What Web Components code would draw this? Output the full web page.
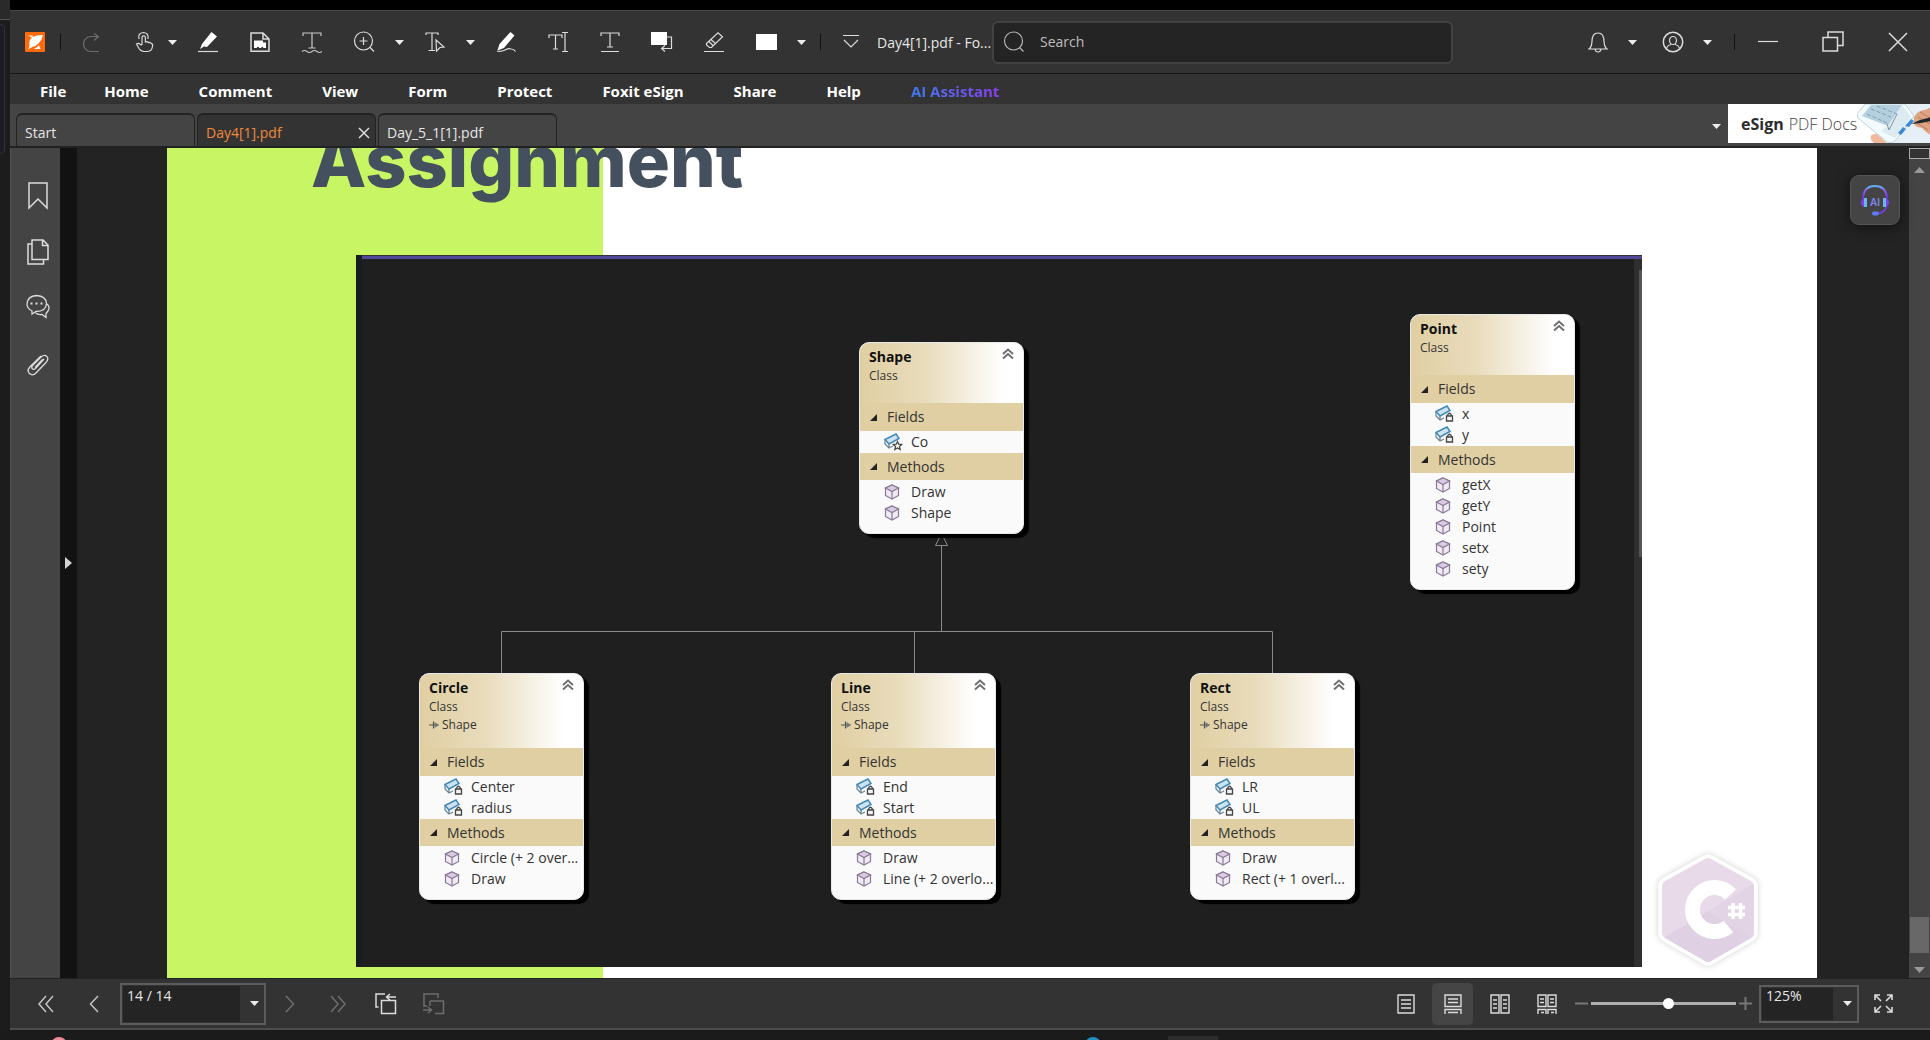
<!DOCTYPE html>
<html lang="en">
<head>
<meta charset="utf-8">
<title>Day4[1].pdf - Foxit</title>
<style>
html,body{margin:0;height:100%;background:#000;overflow:hidden}
body{font:14px/20px "Open Sans","Noto Sans",sans-serif;color:#e6e6e6}
</style>
</head>
<body>
<desktop-screen></desktop-screen>
<script>
const BASE = `<style>
*{box-sizing:border-box}
button{all:unset;box-sizing:border-box;display:flex;align-items:center;justify-content:center;cursor:pointer}
input{font:inherit;color:inherit;border:0;outline:0;margin:0}
</style>`;

function define(name, html, ready) {
  const tpl = document.createElement('template');
  tpl.innerHTML = BASE + html;
  customElements.define(name, class extends HTMLElement {
    constructor() {
      super();
      this.attachShadow({mode: 'open'}).append(tpl.content.cloneNode(true));
    }
    connectedCallback() { if (ready) ready(this, this.shadowRoot); }
  });
}

/* name: [width, height, svg body] */
const ICONS = {
  logo: [20,20,`<rect width="20" height="20" rx="1" fill="#ff6a0a" stroke="none"/><path fill="#fff" stroke="none" d="M3 3.500h5l-.5 1.500Q11 3 18 3q-1 5-4.500 8.500-2.500 2.500-5 3-2 .5-5.500 3 1.500-2.500 1.500-4.500Q3.500 8 7 5.500zM14 13l1.500 4H9q3.500-1.200 5-4z"/>`],
  redo: [20,20,`<path stroke="#6e6e6e" d="M12 1.500l4.500 3-4.500 4M16.500 4.500H9a7 7 0 0 0 0 15h8"/>`],
  hand: [20,22,`<path d="M8 14V6.500a1.700 1.700 0 0 1 3.400 0V11q2-1 3 .6 2-.8 3 1 1.600.3 1.200 2.200-.3 5.200-5 5.700H10q-3 0-5-3l-2.500-4.500q2-1.400 4 .6L8 14M5 8q-1.500-6 4.500-6.500Q15 2 14 8"/>`],
  highlight: [20,20,`<path fill="#fff" stroke="none" d="M13.500 0l5.500 4.500L9 15l-3-.5-4 2.500 2-5z"/><path stroke="#d8d8d8" d="M0 19.500h20"/>`],
  stamp: [20,20,`<path d="M1 1h12l6 6v12.300H1zM13 1v6h6" stroke-width="1.500"/><path fill="#fff" stroke="none" d="M4 8.500h9v2h3V16h-2.500l-1.200-1.500L11 16H9.500L8 14.500 6.500 16H4z"/>`],
  twave: [20,20,`<path stroke="#c8c8c8" d="M1 4V1h18v3M10 1v15M6.500 16h7M0 19.500q2.500-2 5 0t5 0 5 0 5 0"/>`],
  zoom: [22,22,`<circle cx="10.500" cy="10" r="9"/><path d="M10.500 6v8M6.500 10h8M17 16.500l4 4"/>`],
  tselect: [20,20,`<path d="M1 3V1h12v2M7 1v17M3.500 18.500H10M11 8l8 7-4 .5-3.500 3.500z"/>`],
  pencil: [20,20,`<path fill="#fff" stroke="none" d="M14.500 0l4 3.500L8 16l-6.500 2.500L3.500 12z"/><path d="M1 19q4 1 8-1t6-1q3 0 4.500 2.500"/>`],
  tcursor: [20,20,`<path d="M1 6V3h13v3M7.500 3v14M5 17h5M14 .5h6M17 .5v19M14 19.500h6"/>`],
  tunder: [20,20,`<path d="M1 4V1h18v3M10 1v14M7 15h6M1 19.500h18"/>`],
  replace: [22,20,`<path fill="#fff" stroke="none" d="M0 0h16v13H0z"/><path d="M16 5h4.500v11.500H11M14 13.500l-3.500 3 3.500 3"/>`],
  eraser: [20,20,`<path d="M2.500 11.500L14 .8l4.500 4L7.500 15.500H5.500L2.500 13zM7 7.500l4.500 4M5 9.500l4.500 4.500M0 19.500h20"/>`],
  rect: [21,16,`<path fill="#fff" stroke="none" d="M0 0h21v16H0z"/>`],
  more: [16,16,`<path d="M0 1.500h16M1 6l7 7 7-7"/>`],
  search: [22,22,`<circle cx="10.500" cy="10" r="9" stroke="#b4b4b4"/><path stroke="#b4b4b4" d="M16.500 16.500l4 4"/>`],
  bell: [20,20,`<path d="M0 17h20M1.500 17Q4 14 4 9.500 4 1 10 1t6 8.500Q16 14 18.500 17M7 17q.5 3 3 3t3-3"/>`],
  user: [22,22,`<circle cx="11" cy="11" r="9.700" stroke-width="1.500"/><ellipse cx="11" cy="9.500" rx="3.500" ry="4"/><path d="M4.500 17.500q.5-3 4.500-4M17.500 17.500q-.5-3-4.500-4"/>`],
  min: [20,20,`<path d="M0 9.500h20"/>`],
  restore: [22,22,`<path d="M1 6.500h14.500V20H1zM6 6.500V1h15v13.500h-5.500" stroke-width="1.500"/>`],
  close: [18,18,`<path d="M0 0l18 18M18 0L0 18" stroke-width="1.500"/>`],
  x: [10,10,`<path d="M0 0l10 10M10 0L0 10" stroke-width="1.500"/>`],
  bookmark: [20,28,`<path d="M1 1h18v25l-9-9-9 9z" stroke-width="1.500"/>`],
  pages: [22,26,`<path d="M5 1h11l5 5v14.500H5zM15.500 1v5.500H21M5 5H1v20h15.500v-4" stroke-width="1.500"/>`],
  comments: [24,28,`<path d="M6 17Q1 14.500 1 10q.5-8 9.500-8.500Q20 2 20.500 9.500 20 17.500 10 17.500L6 20zM21 10q3.500 3 1 7l-2 2.500v4L16 20.500q-4 .5-6.500-1.500" stroke-width="1.300"/><path stroke-dasharray="2 3" stroke-width="2" d="M4.500 9.500h13"/>`],
  clip: [22,26,`<path d="M17 7.500L8.500 17q-2 1.500-3.200.3T5.500 14L14 5.500q3.500-3 5.800-.6t-.6 5.800L9 21.500q-3.500 3.300-6.500.6t.3-6.600L14 4.500M15.500 8L8 16" transform="translate(0 .5)" stroke-width="1.300"/>`],
  first: [16,16,`<path stroke="#c4c4c4" d="M8 0L1 8l7 8M15 0L8 8l7 8" stroke-width="1.500"/>`],
  prev: [10,16,`<path stroke="#c4c4c4" d="M9 0L1.500 8 9 16" stroke-width="1.500"/>`],
  next: [10,16,`<path stroke="#6e6e6e" d="M1 0l7.500 8L1 16" stroke-width="1.500"/>`],
  last: [16,16,`<path stroke="#6e6e6e" d="M1 0l7 8-7 8M8 0l7 8-7 8" stroke-width="1.500"/>`],
  back: [22,22,`<path d="M6.500 7.500H20.500V20.500H6.500zM3.500 14H1V1h9M12 4h9M15 1l-3.500 3L15 7" stroke-width="1.500"/>`],
  fwd: [22,22,`<path stroke="#6e6e6e" d="M7 8h13.500v12.500H12M7 8v5M4 13H1V1h14v4M0 17h8M5 14l3.500 3L5 20" stroke-width="1.500"/>`],
  single: [18,20,`<path d="M1 1h16v18H1zM4 6h10M4 10h10M4 14h10" stroke-width="1.400"/>`],
  cont: [18,20,`<path d="M1 1h16v11.500H1zM4 5h10M4 8.500h10M1 20v-4.500h16V20M4 18.500h10" stroke-width="1.400"/>`],
  facing: [20,20,`<path d="M1 1h8v18H1zM11 1h8v18h-8zM3 6h4M3 10h4M3 14h4M13 6h4M13 10h4M13 14h4" stroke-width="1.400"/>`],
  facingc: [20,20,`<path d="M1 1h8v11.500H1zM11 1h8v11.500h-8zM3 5h4M3 8.500h4M13 5h4M13 8.500h4M1 20v-4.500h8V20M11 20v-4.500h8V20M4 18.500h3M14 18.500h3" stroke-width="1.400"/>`],
  minus: [13,13,`<path stroke="#787878" d="M0 6.500h13" stroke-width="2"/>`],
  plus: [13,13,`<path stroke="#787878" d="M0 6.500h13M6.500 0v13" stroke-width="2"/>`],
  full: [19,19,`<path d="M1 6V1h5M13 1h5v5M18 13v5h-5M6 18H1v-5M1 1l6 6M18 1l-6 6M18 18l-6-6M1 18l6-6" stroke-width="1.600"/>`],
  caret: [9,5,`<path fill="#ededed" stroke="none" d="M0 0h9L4.500 5z"/>`],
  up: [11,6,`<path fill="#999" stroke="none" d="M0 6h11L5.500 0z"/>`],
  down: [11,6,`<path fill="#999" stroke="none" d="M0 0h11L5.500 6z"/>`],
  right: [7,12,`<path fill="#d4d4d4" stroke="none" d="M0 0l7 6-7 6z"/>`],
  collapse: [12,11,`<path d="M1 6l5-4.500L11 6M1 10.500L6 6l5 4.500" stroke="#707070" stroke-width="2"/>`],
  tri: [7,7,`<path fill="#222" stroke="none" d="M7 0v7H0z"/>`],
  inherit: [10,8,`<path stroke="#555" d="M0 4h9.500M4.500 .5v7"/><path fill="#777" stroke="none" d="M5.500 1v6L10 4z"/>`],
  field: [18,17,`<path d="M1 6.500L12 1l3 4.500-10 5.500z" fill="#cfe3ef" stroke="#4189b8" stroke-width="1.500"/><path d="M1 6.500V11l4 4 4-2M5 11v4" stroke="#6b8798" stroke-width="1.300"/><path d="M11.500 11h6v5h-6zM12.800 11V9.500q1.700-2.500 3.400 0V11" fill="#f4f4f4" stroke="#444" stroke-width="1.300"/>`],
  fieldstar: [18,17,`<path d="M1 6.500L12 1l3 4.500-10 5.500z" fill="#cfe3ef" stroke="#4189b8" stroke-width="1.500"/><path d="M1 6.500V11l4 4 4-2M5 11v4" stroke="#6b8798" stroke-width="1.300"/><path d="M13.500 8.500l1.200 2.700 3 .3-2.200 2 .7 3-2.700-1.500-2.700 1.500.7-3-2.200-2 3-.3z" fill="#f8f8f8" stroke="#444"/>`],
  method: [16,16,`<path d="M8 1l6.500 3v7.500L8 15l-6.500-3.500V4z" fill="#f0eaf2" stroke="#8b7a97" stroke-width="1.200"/><path d="M8 1l6.500 3L8 7.500 1.500 4z" fill="#d9cce2" stroke="#8b7a97"/><path d="M8 7.500V15" stroke="#8b7a97" stroke-width="1.200"/>`]
};
define('ui-icon', `<style>:host{display:inline-flex;flex:none}svg{display:block;fill:none;stroke:#dcdcdc;stroke-width:1.2;overflow:visible}</style><div></div>`, (el, r) => {
  const [w, h, body] = ICONS[el.getAttribute('name')];
  r.querySelector('div').innerHTML = `<svg width="${w}" height="${h}" viewBox="0 0 ${w} ${h}" aria-hidden="true">${body}</svg>`;
});

/* toolbar button, with an optional drop-down arrow */
define('tool-button', `<style>
:host{display:flex;align-items:center;height:42px;flex:none}
.main{width:52px;height:42px}
.arrow{display:none;width:19px;height:42px}
:host([split]) .arrow{display:flex}
:host([split=narrow]) .arrow{width:12px;margin:0 4px 0 -4px}
:host([split=wide]) .arrow{width:23px;margin:0 3px 0 -3px}
:host([size=win]) .main{width:65px}
:host([size=nav]) .main{width:48px}
:host([size=view]) .main{width:47px}
:host([active]) .main{width:41px;margin:0 3px;background:#454545;border-radius:5px}
</style><button class="main"></button><button class="arrow" aria-label="More"><ui-icon name="caret"></ui-icon></button>`, (el, r) => {
  const main = r.querySelector('.main');
  main.setAttribute('aria-label', el.getAttribute('icon'));
  main.innerHTML = `<ui-icon name="${el.getAttribute('icon')}"></ui-icon>`;
});

define('title-bar', `<style>
:host{display:flex;align-items:center;height:64px;background:#333;border-top:1px solid #4a4a4a;border-bottom:1px solid #161616}
.logo{width:50px;display:flex;justify-content:center}
.sep{width:1px;height:16px;background:#111;flex:none;margin:0 5px 0 0}
.sep.mid{margin:0 4px 0 9px}
.sep.end{margin:0 0 0 12px}
.title{width:115px;white-space:nowrap;flex:none;margin-top:2px}
.search{display:flex;align-items:center;gap:15px;flex:0 1 461px;height:43px;border:2px solid #424242;border-radius:6px;background:#242424;padding-left:9px}
.search input{background:none;flex:1;min-width:0;color:#c4c4c4;padding:0}
.search input::placeholder{color:#bebebe;opacity:1}
.win{margin-left:auto;display:flex;align-items:center}
</style>
<span class="logo"><ui-icon name="logo"></ui-icon></span><span class="sep"></span>
<tool-button icon="redo"></tool-button>
<tool-button icon="hand" split="narrow"></tool-button>
<tool-button icon="highlight"></tool-button>
<tool-button icon="stamp"></tool-button>
<tool-button icon="twave"></tool-button>
<tool-button icon="zoom" split></tool-button>
<tool-button icon="tselect" split></tool-button>
<tool-button icon="pencil"></tool-button>
<tool-button icon="tcursor"></tool-button>
<tool-button icon="tunder"></tool-button>
<tool-button icon="replace"></tool-button>
<tool-button icon="eraser"></tool-button>
<tool-button icon="rect" split></tool-button>
<span class="sep mid"></span>
<tool-button icon="more"></tool-button>
<span class="title">Day4[1].pdf - Fo...</span>
<label class="search"><ui-icon name="search"></ui-icon><input type="text" placeholder="Search" aria-label="Search"></label>
<div class="win">
<tool-button icon="bell" split="wide"></tool-button><tool-button icon="user" split="wide"></tool-button>
<span class="sep end"></span>
<tool-button icon="min" size="win"></tool-button><tool-button icon="restore" size="win"></tool-button><tool-button icon="close" size="win"></tool-button>
</div>`);

define('menu-bar', `<style>
:host{display:block;background:#333;height:30px}
nav{display:flex;gap:50px;padding:5px 0 0 30px;font-weight:700;font-size:15px;line-height:24px;color:#fff}
button:first-child{margin-right:-12px}
.ai{background:linear-gradient(90deg,#3f7bf0,#8b3ff0);-webkit-background-clip:text;background-clip:text;color:transparent}
</style><nav><button>File</button><button>Home</button><button>Comment</button><button>View</button><button>Form</button><button>Protect</button><button>Foxit eSign</button><button>Share</button><button>Help</button><button class="ai">AI Assistant</button></nav>`);

define('doc-tab', `<style>
:host{display:flex;align-items:center;justify-content:space-between;width:179px;height:33px;padding:5px 6px 0 8px;background:#444;border:solid #222;border-width:2px 1px 0;border-radius:6px 6px 0 0}
:host([active]){background:#333;color:#f08a3c}
.x{display:none}:host([active]) .x{display:flex}
</style><button><slot></slot></button><button class="x" aria-label="Close tab"><ui-icon name="x"></ui-icon></button>`);

define('esign-banner', `<style>
:host{display:flex;width:202px;height:39px;background:#fff}
a{display:flex;flex:1;align-items:center;padding-left:13px;color:#444;text-decoration:none;font-size:16px;white-space:nowrap}
b{color:#2c2c2c;margin-right:5px}span{font-weight:300;flex:1}svg{flex:none}
</style><a href="#"><b>eSign</b><span>PDF Docs</span><svg width="75" height="39" viewBox="0 0 75 39"><path d="M44 0h31v39H34z" fill="#e6eff6"/><path d="M14 36q-2-7 6-6l10 9H17z" fill="#f0b99c"/><path d="M0 10L8 0h40l9 12-19 25q-4 3-8 1L1 14z" fill="#f3fafd" stroke="#bfd3dd"/><path d="M5 12L14 1h31l-14 21z" fill="#b4d0de"/><path d="M31 22L45 1l9 12-16 21-14-7z" fill="#dcebf1"/><path d="M14 5l20 8M10 10l20 9M20 2l20 8" stroke="#7da2b5" stroke-dasharray="4 2" fill="none"/><path d="M30 20l2 6 8-16" stroke="#89939b" fill="none"/><path d="M41 29l5-6 3 2-5 6zM48 22l6-7 3 2-5 6z" fill="#3d8ad6"/><path d="M57 13q4-7 11-7l7-3v29q-7-4-10-8-8-1-8-5z" fill="#dda483"/><path d="M63 8l12 7M61 13l12 7M60 19l11 7" stroke="#b97b5c" fill="none"/><path d="M54 20l9-4 12-3v4l-11 2z" fill="#23272c"/></svg></a>`);

define('tab-strip', `<style>
:host{display:flex;height:44px;background:#444;border-bottom:2px solid #222;padding-left:6px;justify-content:space-between}
.tabs{display:flex;gap:2px;align-items:flex-end}
.right{display:flex;align-items:flex-start}
.list{width:24px;height:44px}
</style><div class="tabs"><doc-tab>Start</doc-tab><doc-tab active>Day4[1].pdf</doc-tab><doc-tab>Day_5_1[1].pdf</doc-tab></div>
<div class="right"><button class="list" aria-label="All tabs"><ui-icon name="caret"></ui-icon></button><esign-banner></esign-banner></div>`);

define('side-rail', `<style>
:host{display:flex;flex:none}
.tools{width:50px;background:#444;border-left:1px solid #555;padding-top:20px;display:flex;flex-direction:column;align-items:stretch}
.tools button{height:56px;padding-left:4px}
.grip{width:17px;background:#121212}
</style><div class="tools"><button aria-label="Bookmarks"><ui-icon name="bookmark"></ui-icon></button><button aria-label="Pages"><ui-icon name="pages"></ui-icon></button><button aria-label="Comments"><ui-icon name="comments"></ui-icon></button><button aria-label="Attachments"><ui-icon name="clip"></ui-icon></button></div>
<button class="grip" aria-label="Expand panel"><ui-icon name="right"></ui-icon></button>`);

define('class-member', `<style>:host{display:flex;align-items:center;height:21px;padding-left:24px;white-space:nowrap}.i{width:27px;display:flex}</style><span class="i"></span><slot></slot>`, (el, r) => {
  r.querySelector('.i').innerHTML = `<ui-icon name="${el.getAttribute('kind')}"></ui-icon>`;
});

define('class-node', `<style>
:host{position:absolute;width:165px;border:1px solid #e8e8e8;border-radius:10px;background:#fafafa;box-shadow:5px 4px 1px #000;color:#333;overflow:hidden;line-height:18px}
header{display:flex;justify-content:space-between;height:60px;padding:5px 9px 0 9px;background:linear-gradient(90deg,#e0cfa2,#e9dcbc 40%,#fff 88%);font-size:12px;line-height:19px}
:host([base]) header{height:74px}
h2{margin:0;font-size:14px;line-height:18px;color:#111}
.base{display:none;line-height:18px}
:host([base]) .base{display:flex;align-items:center;gap:3px}
h3{display:flex;align-items:center;gap:10px;margin:0;height:28px;padding-left:10px;background:#e0cfa2;font-weight:400;font-size:14px}
h3.m{height:27px}
.f{padding-bottom:1px}.ms{padding:1px 0 10px}
</style><header><div><h2></h2><div>Class</div><div class="base"><ui-icon name="inherit"></ui-icon><span></span></div></div><ui-icon name="collapse"></ui-icon></header>
<h3><ui-icon name="tri"></ui-icon>Fields</h3><div class="f"><slot name="field"></slot></div>
<h3 class="m"><ui-icon name="tri"></ui-icon>Methods</h3><div class="ms"><slot></slot></div>`, (el, r) => {
  r.querySelector('h2').textContent = el.getAttribute('name');
  r.querySelector('.base span').textContent = el.getAttribute('base') || '';
});

define('class-diagram', `<style>
:host{display:block;position:relative;height:712px;background:linear-gradient(#555,#555) right 15px/3px 287px no-repeat,linear-gradient(90deg,#1f1f1f calc(100% - 8px),#2f2f2f 0);border-left:6px solid #191c22;overflow:hidden}
.bar{height:4px;background:#51489a;border-top:1px solid #333}
svg{position:absolute;left:0;top:0;width:100%;height:100%;fill:none;stroke:#898989}
.shape{left:497px;top:87px}.point{left:1048px;top:59px}.circle{left:57px;top:418px}.line{left:469px;top:418px}.rect{left:828px;top:418px}
</style><div class="bar"></div>
<svg><path d="M579.500 291V376.500M573.500 290.500h12l-6-12zM139.500 418V376.500H910.500V418M552.500 376.500V418"/></svg>
<class-node class="shape" name="Shape"><class-member slot="field" kind="fieldstar">Co</class-member><class-member kind="method">Draw</class-member><class-member kind="method">Shape</class-member></class-node>
<class-node class="point" name="Point"><class-member slot="field" kind="field">x</class-member><class-member slot="field" kind="field">y</class-member><class-member kind="method">getX</class-member><class-member kind="method">getY</class-member><class-member kind="method">Point</class-member><class-member kind="method">setx</class-member><class-member kind="method">sety</class-member></class-node>
<class-node class="circle" name="Circle" base="Shape"><class-member slot="field" kind="field">Center</class-member><class-member slot="field" kind="field">radius</class-member><class-member kind="method">Circle (+ 2 over...</class-member><class-member kind="method">Draw</class-member></class-node>
<class-node class="line" name="Line" base="Shape"><class-member slot="field" kind="field">End</class-member><class-member slot="field" kind="field">Start</class-member><class-member kind="method">Draw</class-member><class-member kind="method">Line (+ 2 overlo...</class-member></class-node>
<class-node class="rect" name="Rect" base="Shape"><class-member slot="field" kind="field">LR</class-member><class-member slot="field" kind="field">UL</class-member><class-member kind="method">Draw</class-member><class-member kind="method">Rect (+ 1 overl...</class-member></class-node>`);

define('csharp-logo', `<style>:host{display:block}svg{display:block;overflow:visible}</style>
<svg width="104" height="114" viewBox="0 0 104 114" role="img" aria-label="C# logo"><defs><filter id="g" x="-20%" y="-20%" width="140%" height="140%"><feDropShadow dx="0" dy="0" stdDeviation="3" flood-color="#000" flood-opacity=".2"/></filter><clipPath id="h"><path d="M49 6Q52 4 55 6L95 28Q98 30 98 33V80Q98 83 95 85L55 108Q52 110 49 108L9 85Q6 83 6 80V33Q6 30 9 28z"/></clipPath></defs>
<path d="M49 6Q52 4 55 6L95 28Q98 30 98 33V80Q98 83 95 85L55 108Q52 110 49 108L9 85Q6 83 6 80V33Q6 30 9 28z" fill="#fff" stroke="#fff" stroke-width="7" filter="url(#g)"/>
<g clip-path="url(#h)"><path fill="#e8dae8" d="M0 0h104v114H0z"/><path fill="#dfd0e3" d="M0 89L52 58l52 31v25H0z"/><path fill="#e2d4e5" d="M104 27L52 58l52 31z"/></g>
<path d="M74.500 41.500A22 22 0 1 0 72.500 73.500" fill="none" stroke="#fff" stroke-width="15"/>
<path d="M77 50v16M84.500 50v16M72 54.500h17M72 61.500h17" stroke="#fff" stroke-width="3.500"/></svg>`);

define('pdf-page', `<style>
:host{display:flow-root;position:relative;flex:1;background:linear-gradient(90deg,#c7f564 436px,#fff 436px);overflow:hidden}
h1{margin:-23px 0 58px 144px;font:800 72px/72px Inter,"Open Sans",sans-serif;color:#45505e}
class-diagram{margin:0 175px 0 189px}
csharp-logo{position:absolute;right:57px;bottom:11px}
</style><h1>Assignment</h1><class-diagram></class-diagram><csharp-logo></csharp-logo>`);

define('scroll-rail', `<style>
:host{display:flex;flex-direction:column;align-items:center;width:21px;background:#444;flex:none}
.split{width:21px;height:11px;border:1px solid #aaa;background:#333}
.arrow{width:21px;height:22px}.arrow:last-child{height:17px;margin-top:8px}
.track{flex:1;display:flex;align-items:flex-end}
.thumb{width:19px;height:36px;background:#686868}
</style><div class="split"></div><button class="arrow" aria-label="Scroll up"><ui-icon name="up"></ui-icon></button><div class="track"><div class="thumb"></div></div><button class="arrow" aria-label="Scroll down"><ui-icon name="down"></ui-icon></button>`);

define('ai-helper', `<style>:host{display:block}
button{width:50px;height:50px;border-radius:9px;background:#444;border:1px solid #555;box-shadow:0 2px 14px #0008}
text{font:600 10px Inter,sans-serif}
</style><button aria-label="AI helper"><svg width="32" height="32" viewBox="0 0 32 32" fill="none"><defs><linearGradient id="a" x1="0" y1="0" x2="0" y2="1"><stop stop-color="#5fb4ee"/><stop offset=".4" stop-color="#8a5bf0"/><stop offset="1" stop-color="#7430e8"/></linearGradient></defs><path d="M4 14Q5 2 16 2t12 12" stroke="url(#a)" stroke-width="2"/><path d="M27.500 22Q26 29 18 29.500" stroke="#7b3cf0" stroke-width="1.500"/><path d="M5 14q-5 4.500 0 9zM27 14q5 4.500 0 9z" fill="#8040f0" stroke="#8040f0"/><path d="M5 14h3v9H5zM24 14h3v9h-3z" fill="#66b6f0"/><rect x="13" y="27.500" width="7" height="4" rx="2" fill="#5f7cf5"/><text x="11" y="22" fill="#7d86ee">AI</text></svg></button>`);

define('doc-view', `<style>
:host{display:flex;min-height:0;background:#232323;position:relative}
.sheet{flex:1;display:flex;min-width:0;padding:0 92px 0 90px}
ai-helper{position:absolute;right:30px;top:27px}
</style><side-rail></side-rail><div class="sheet"><pdf-page></pdf-page></div><scroll-rail></scroll-rail><ai-helper></ai-helper>`);

define('combo-box', `<style>
:host{display:flex;border:2px solid #5c5c5c;padding:1px;flex:none}
input{background:#242424;flex:1;min-width:0;padding:0 4px 15px}
button{width:23px;padding-left:6px}
</style><input type="text"><button aria-label="Open list"><ui-icon name="caret"></ui-icon></button>`, (el, r) => {
  const i = r.querySelector('input');
  i.value = el.getAttribute('value');
  i.setAttribute('aria-label', el.getAttribute('label'));
});

define('status-bar', `<style>
:host{display:flex;align-items:center;justify-content:space-between;height:52px;background:#333;border-top:1px solid #222;border-bottom:2px solid #4c4c4c}
div{display:flex;align-items:center}
.l{padding-left:12px}.r{padding-right:23px}
.page{width:146px;height:42px;margin-left:2px}
.scale{margin-left:4px}
.zoom{width:100px;height:38px;margin-left:6px}
.step{width:15px;height:30px}
input[type=range]{appearance:none;width:145px;height:20px;background:none;margin:0 2px}
input::-webkit-slider-runnable-track{height:3px;background:#b0b0b0}
input::-webkit-slider-thumb{appearance:none;width:11px;height:11px;margin-top:-4px;border-radius:50%;background:#fff}
</style>
<div class="l"><tool-button icon="first" size="nav"></tool-button><tool-button icon="prev" size="nav"></tool-button>
<combo-box class="page" value="14 / 14" label="Page"></combo-box>
<tool-button icon="next" size="nav"></tool-button><tool-button icon="last" size="nav"></tool-button><tool-button icon="back" size="nav"></tool-button><tool-button icon="fwd" size="nav"></tool-button></div>
<div class="r"><tool-button icon="single" size="view"></tool-button><tool-button icon="cont" active></tool-button><tool-button icon="facing" size="view"></tool-button><tool-button icon="facingc" size="view"></tool-button>
<div class="scale"><button class="step" aria-label="Zoom out"><ui-icon name="minus"></ui-icon></button><input type="range" min="0" max="100" value="54" aria-label="Zoom"><button class="step" aria-label="Zoom in"><ui-icon name="plus"></ui-icon></button></div>
<combo-box class="zoom" value="125%" label="Zoom level"></combo-box>
<tool-button icon="full" size="nav"></tool-button></div>`);

define('task-strip', `<style>:host{display:block;background:#1b1b1b;overflow:hidden}svg{display:block;width:100%;height:10px}</style>
<svg><circle cx="59" cy="15" r="8" fill="#f08b9a"/><circle cx="1093" cy="15" r="8" fill="#1f8fc4"/><path d="M1168 6h50v4h-50z" fill="#2d2d2d"/></svg>`);

define('desktop-screen', `<style>
:host{display:grid;grid-template:10px minmax(0,1fr) 10px/10px minmax(0,1fr);height:100vh}
.top,task-strip{grid-column:1/3}.top{background:linear-gradient(90deg,#2a2a2a 10px,#000 0)}
.edge{background:#1c1c1c}
.edge i{display:block;height:10px;background:#2a2a2a;border-bottom:1px solid #555}
.edge b{display:block;width:5px;height:130px;margin-top:4px;background:#1b1c26;border:1px solid #333;border-left:0;border-radius:0 6px 6px 0}
.app{display:flex;flex-direction:column;min-width:0}
doc-view{flex:1}
</style><div class="top"></div><div class="edge"><i></i><b></b></div>
<div class="app"><title-bar></title-bar><menu-bar></menu-bar><tab-strip></tab-strip><doc-view></doc-view><status-bar></status-bar></div>
<task-strip></task-strip>`);
</script>
</body>
</html>
